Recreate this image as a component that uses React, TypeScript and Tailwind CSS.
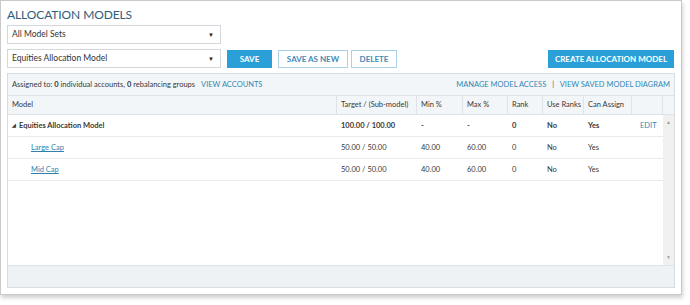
const cols = "grid grid-cols-[329px_80px_46px_45px_35px_41px_48px_31px]";

type Row = {
  name: string;
  target: string;
  min: string;
  max: string;
  rank: string;
  useRanks: string;
  canAssign: string;
  parent?: boolean;
};

const rows: Row[] = [
  { name: "Equities Allocation Model", target: "100.00 / 100.00", min: "-", max: "-", rank: "0", useRanks: "No", canAssign: "Yes", parent: true },
  { name: "Large Cap", target: "50.00 / 50.00", min: "40.00", max: "60.00", rank: "0", useRanks: "No", canAssign: "Yes" },
  { name: "Mid Cap", target: "50.00 / 50.00", min: "40.00", max: "60.00", rank: "0", useRanks: "No", canAssign: "Yes" },
];

function Select({ label }: { label: string }) {
  return (
    <div className="w-[214px] h-[19px] border border-[#d4d8dc] bg-white flex items-center justify-between pl-[4px] pr-[6px] text-[8.5px] text-[#333]">
      <span>{label}</span>
      <span className="text-[6px] text-[#222]">▼</span>
    </div>
  );
}

export default function App() {
  return (
    <div className="w-[690px] h-[305px] bg-white font-['Lato',sans-serif]">
      <div className="w-[682px] h-[295px] border border-[#c9c9c9] bg-white shadow-[1px_3px_4px_rgba(0,0,0,0.18)] pl-[6px] pt-[7px] flex flex-col">
        <h1 className="text-[12px] leading-[14px] text-[#2f5d7c] tracking-[-0.1px]">ALLOCATION MODELS</h1>
        <div className="mt-[3px]">
          <Select label="All Model Sets" />
        </div>
        <div className="mt-[5px] flex items-center w-[667px]">
          <Select label="Equities Allocation Model" />
          <button className="ml-[6px] w-[45px] h-[18px] bg-[#2a9fd8] text-white text-[8px] font-bold">SAVE</button>
          <button className="ml-[6px] w-[70px] h-[18px] bg-white border border-[#a9d2ea] text-[#3f8ab6] text-[8px] font-bold">SAVE AS NEW</button>
          <button className="ml-[3px] w-[46px] h-[18px] bg-white border border-[#a9d2ea] text-[#3f8ab6] text-[8px] font-bold">DELETE</button>
          <button className="ml-auto w-[126px] h-[18px] bg-[#2a9fd8] text-white text-[8px] font-bold">CREATE ALLOCATION MODEL</button>
        </div>

        <div className="mt-[5px] w-[668px] h-[215px] border border-[#d8dde2] flex flex-col text-[7.5px] text-[#383838]">
          <div className="h-[22px] bg-[#f3f6f8] flex items-center justify-between px-[4px] border-b border-[#dfe3e7]">
            <span>
              Assigned to: <b>0</b> individual accounts, <b>0</b> rebalancing groups
              <span className="ml-[6px] text-[#2f88b5]">VIEW ACCOUNTS</span>
            </span>
            <span className="text-[#2f88b5]">
              MANAGE MODEL ACCESS <span className="mx-[4px] text-[#555]">|</span> VIEW SAVED MODEL DIAGRAM
            </span>
          </div>

          <div className="h-[19px] bg-[#f3f6f8] border-b border-[#dfe3e7] flex">
            <div className={`${cols} w-[655px]`}>
              {["Model", "Target / (Sub-model)", "Min %", "Max %", "Rank", "Use Ranks", "Can Assign", ""].map((h, i) => (
                <div key={i} className="flex items-center px-[4px] border-r border-[#dfe3e7] whitespace-nowrap">
                  {h}
                </div>
              ))}
            </div>
            <div className="flex-1" />
          </div>

          <div className="flex-1 flex bg-white">
            <div className="w-[655px]">
              {rows.map((r) => (
                <div key={r.name} className={`${cols} h-[22px] border-b border-[#e8eaec] ${r.parent ? "font-bold" : ""}`}>
                  <div className="flex items-center px-[4px]">
                    {r.parent ? (
                      <span className="flex items-center">
                        <span className="text-[5px] mr-[3px] mt-[1px]">◢</span>
                        {r.name}
                      </span>
                    ) : (
                      <span className="ml-[19px] underline text-[#2f7fb0]">{r.name}</span>
                    )}
                  </div>
                  <div className="flex items-center px-[4px] whitespace-nowrap">{r.target}</div>
                  <div className="flex items-center px-[4px]">{r.min}</div>
                  <div className="flex items-center px-[4px]">{r.max}</div>
                  <div className="flex items-center px-[4px]">{r.rank}</div>
                  <div className="flex items-center px-[4px]">{r.useRanks}</div>
                  <div className="flex items-center px-[4px]">{r.canAssign}</div>
                  <div className="flex items-center px-[8px] font-normal text-[#2f88b5]">{r.parent ? "EDIT" : ""}</div>
                </div>
              ))}
            </div>
            <div className="flex-1 bg-[#f0f0f0] flex flex-col justify-between items-center py-[4px] text-[#a0a0a0]">
              <span className="text-[5px]">▲</span>
              <span className="text-[5px]">▼</span>
            </div>
          </div>

          <div className="h-[22px] bg-[#eef2f5] border-t border-[#dfe3e7]" />
        </div>
      </div>
    </div>
  );
}
